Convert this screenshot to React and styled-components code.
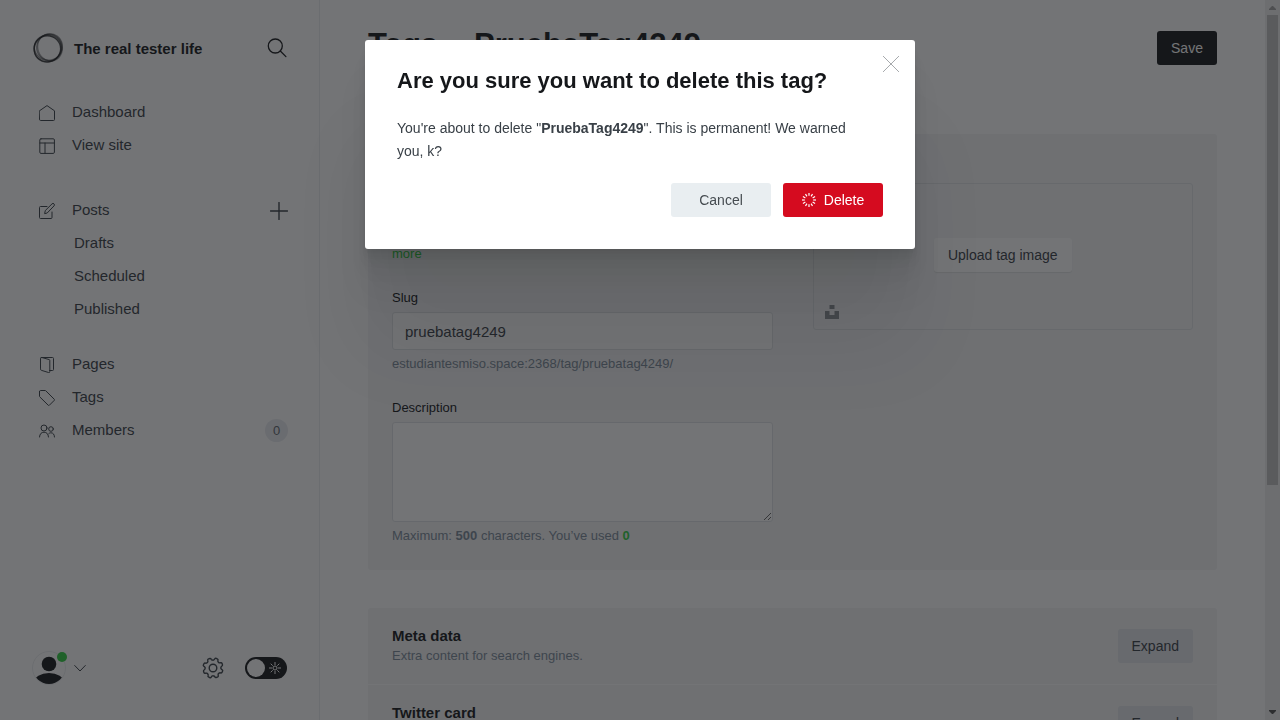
import React from "react";
import styled, { createGlobalStyle } from "styled-components";

const GlobalStyle = createGlobalStyle`
  *, *::before, *::after { box-sizing: border-box; }
  body {
    margin: 0;
    background: #fff;
    color: #15171a;
    font-family: "Liberation Sans", Arial, sans-serif;
    font-size: 14px;
  }
  h1, h2, p, ul { margin: 0; padding: 0; }
  ul { list-style: none; }
  a { color: inherit; text-decoration: none; }
  button, input, textarea { font-family: inherit; }
  svg { display: block; flex: none; }
`;

/* ---------- shell ---------- */

const Shell = styled.div`
  display: flex;
  height: 100vh;
  overflow: hidden;
`;

const Sidebar = styled.nav`
  flex: 0 0 320px;
  display: flex;
  flex-direction: column;
  padding: 32px 31px 35px 32px;
  border-right: 1px solid #ebeef0;
  color: #394047;
`;

const Main = styled.main`
  flex: 1;
  min-width: 0;
  padding: 0 48px;
  overflow: hidden;
`;

const IconButton = styled.button`
  display: flex;
  align-items: center;
  padding: 0;
  border: 0;
  background: none;
  color: ${(p) => p.$color || "#15171a"};
`;

/* ---------- sidebar ---------- */

const SiteHeader = styled.header`
  display: flex;
  align-items: center;
  gap: 10px;
  height: 32px;
  margin-bottom: 32px;
  padding-right: 1px;
`;

const SiteName = styled.div`
  flex: 1;
  padding-top: 2px;
  color: #15171a;
  font-size: 15px;
  font-weight: 700;
  line-height: 20px;
`;

const NavList = styled.ul`
  margin-bottom: ${(p) => p.$gap || 0}px;
`;

const NavRow = styled.li`
  display: flex;
  align-items: center;
  justify-content: space-between;
  height: 33px;
`;

const NavLink = styled.a`
  display: flex;
  align-items: center;
  gap: 17px;
  padding-left: ${(p) => (p.$nested ? 42 : 7)}px;
  font-size: 15px;
  line-height: 30px;
`;

const NavText = styled.span`
  padding-bottom: 2px;
`;

const Badge = styled.span`
  min-width: 23px;
  height: 23px;
  border-radius: 12px;
  background: #e9ebf0;
  color: #5d666f;
  font-size: 13px;
  line-height: 23px;
  text-align: center;
`;

const SidebarFooter = styled.footer`
  display: flex;
  align-items: center;
  height: 34px;
  margin-top: auto;
  padding-right: 1px;
`;

const UserButton = styled(IconButton)`
  gap: 8px;
  margin-right: auto;
`;

const AvatarWrap = styled.span`
  position: relative;
  &::after {
    content: "";
    position: absolute;
    top: 1px;
    right: -1px;
    width: 10px;
    height: 10px;
    border-radius: 50%;
    background: #30cf43;
  }
`;

const Toggle = styled.label`
  position: relative;
  display: flex;
  margin-left: 21px;
  svg {
    position: absolute;
    top: 4px;
    right: 5px;
  }
`;

const ToggleInput = styled.input`
  appearance: none;
  width: 42px;
  height: 22px;
  margin: 0;
  padding: 2px;
  border-radius: 11px;
  background: #15171a;
  &::before {
    content: "";
    display: block;
    width: 18px;
    height: 18px;
    border-radius: 50%;
    background: #fff;
  }
`;

/* ---------- content ---------- */

const PageHeader = styled.header`
  display: flex;
  align-items: center;
  justify-content: space-between;
  height: 96px;
  margin-bottom: 38px;
`;

const PageTitle = styled.h1`
  display: flex;
  align-items: center;
  gap: 8px;
  padding-bottom: 6px;
  font-size: 31px;
  font-weight: 700;
  line-height: 36px;
`;

const Button = styled.button`
  display: inline-flex;
  align-items: center;
  justify-content: center;
  gap: 8px;
  height: 34px;
  min-width: ${(p) => p.$width || 0}px;
  padding: 0 14px;
  border: 0;
  border-radius: 3px;
  background: ${(p) => p.$bg};
  color: ${(p) => p.$fg};
  box-shadow: ${(p) => (p.$raised ? "0 1px 1px rgba(0, 0, 0, 0.08)" : "none")};
  font-size: 14px;
  line-height: 34px;
  white-space: nowrap;
`;

const Block = styled.section`
  margin-bottom: 38px;
  border-radius: 3px;
  background: #f4f5f6;
`;

const FormBlock = styled(Block)`
  display: grid;
  grid-template-columns: 1fr 1fr;
  gap: 40px;
  padding: 24px 24px 25px;
`;

const Fields = styled.div`
  display: flex;
  flex-direction: column;
  gap: 24px;
  min-width: 0;
`;

const NameRow = styled.div`
  display: grid;
  grid-template-columns: 1fr 120px;
  gap: 16px;
`;

const Label = styled.label`
  display: block;
  margin-bottom: 4px;
  font-size: 13px;
  line-height: 21px;
`;

const fieldStyle = `
  display: block;
  width: 100%;
  border: 1px solid #dfe2e5;
  border-radius: 3px;
  background: #fff;
  color: #394047;
  font-size: 15px;
`;

const TextInput = styled.input`
  ${fieldStyle}
  height: 38px;
  padding: 0 12px;
`;

const TextArea = styled.textarea`
  ${fieldStyle}
  height: 100px;
  padding: 10px 12px;
  resize: vertical;
`;

const Help = styled.p`
  margin-top: 4px;
  color: #7c8b9a;
  font-size: 13px;
  line-height: 19px;
  a, b[data-count] { color: #30cf43; }
`;

const ImageDrop = styled.div`
  position: relative;
  display: flex;
  align-items: center;
  justify-content: center;
  height: 147px;
  padding-bottom: 4px;
  border: 1px solid #e0e3e6;
  border-radius: 3px;
`;

const UnsplashButton = styled(IconButton)`
  position: absolute;
  bottom: 10px;
  left: 11px;
`;

const ExpandRow = styled.div`
  display: flex;
  align-items: center;
  justify-content: space-between;
  padding: 18px 24px;
  border-bottom: 1px solid #fff;
`;

const RowTitle = styled.h2`
  font-size: 15px;
  font-weight: 700;
  line-height: 20px;
`;

const RowText = styled.p`
  color: #7c8b9a;
  font-size: 13px;
  line-height: 20px;
`;

/* ---------- scroll track ---------- */

const ScrollTrack = styled.div`
  flex: 0 0 15px;
  display: flex;
  flex-direction: column;
  align-items: center;
  justify-content: space-between;
  background: #f1f1f1;
`;

const ScrollUpper = styled.div`
  display: flex;
  flex-direction: column;
  height: 485px;
`;

const ScrollThumb = styled.div`
  flex: 1;
  width: 11px;
  margin: 0 2px;
  background: #c1c1c1;
`;

/* ---------- modal ---------- */

const Overlay = styled.div`
  position: fixed;
  inset: 0;
  display: flex;
  align-items: flex-start;
  justify-content: center;
  padding-top: 40px;
  background: rgba(21, 23, 26, 0.6);
`;

const Dialog = styled.div`
  position: relative;
  width: 550px;
  padding: 28px 32px 32px;
  border-radius: 3px;
  background: #fff;
  box-shadow:
    0 3px 2px rgba(0, 0, 0, 0.02),
    0 7px 5px rgba(0, 0, 0, 0.03),
    0 13px 10px rgba(0, 0, 0, 0.035),
    0 22px 18px rgba(0, 0, 0, 0.04),
    0 42px 33px rgba(0, 0, 0, 0.05),
    0 100px 80px rgba(0, 0, 0, 0.07);
`;

const DialogTitle = styled.h1`
  margin-bottom: 24px;
  font-size: 22px;
  font-weight: 700;
  line-height: 25px;
`;

const DialogText = styled.p`
  margin-bottom: 20px;
  padding-right: 20px;
  color: #394047;
  font-size: 14px;
  line-height: 23px;
`;

const DialogActions = styled.div`
  display: flex;
  justify-content: flex-end;
  gap: 12px;
`;

const CloseButton = styled(IconButton)`
  position: absolute;
  top: 16px;
  right: 16px;
`;

/* ---------- icons ---------- */

const Icon = ({ size = 16, width = 1, children }) => (
  <svg width={size} height={size} viewBox={`0 0 ${size} ${size}`} fill="none" stroke="currentColor"
    strokeWidth={width} strokeLinecap="round" strokeLinejoin="round" aria-hidden="true">
    {children}
  </svg>
);

const HomeIcon = () => (
  <Icon><path d="M.5 5.8 8 .6l7.500 5.200v8.700a1 1 0 0 1-1 1h-13a1 1 0 0 1-1-1z" /></Icon>
);
const SiteIcon = () => (
  <Icon><rect x=".8" y=".8" width="14.600" height="14.600" rx="1.200" /><path d="M.8 5h14.600M6 5v10.400" /></Icon>
);
const PostsIcon = () => (
  <Icon>
    <path d="M8 3.500H1.500a1 1 0 0 0-1 1v10a1 1 0 0 0 1 1h10.500a1 1 0 0 0 1-1V9" />
    <path d="m5.700 10.300.6-2.800L13 .9a1.300 1.300 0 0 1 2 0 1.400 1.400 0 0 1 0 2L8.500 9.700z" />
  </Icon>
);
const PagesIcon = () => (
  <Icon>
    <path d="M10.500 13.500h3a1 1 0 0 0 1-1v-11a1 1 0 0 0-1-1H2.500" />
    <path d="M1.500 1.500a1 1 0 0 1 1.300-1l7.200 2a1 1 0 0 1 .8 1v11a1 1 0 0 1-1.300 1l-7.200-2.200a1 1 0 0 1-.8-1z" />
  </Icon>
);
const TagIcon = () => (
  <Icon><path d="M.5 1.500v4.700a1 1 0 0 0 .3.700l8.500 8.400a.7.700 0 0 0 1 0l5-5a.7.700 0 0 0 0-1L6.800.8a1 1 0 0 0-.7-.3H1.500a1 1 0 0 0-1 1z" /></Icon>
);
const MembersIcon = () => (
  <Icon>
    <circle cx="5" cy="5" r="3" />
    <circle cx="12" cy="6" r="2.300" />
    <path d="M.5 14C.7 10.800 2.500 9.200 5 9.200s4.300 1.600 4.500 4.800" />
    <path d="M9.800 10.600c.7-.6 1.400-.8 2.200-.8 2 0 3.300 1.400 3.500 4.200" />
  </Icon>
);
const SearchIcon = () => (
  <Icon size={20} width={1.3}><circle cx="8.300" cy="8" r="7" /><path d="m13.300 13 5.600 5.600" /></Icon>
);
const PlusIcon = () => (
  <Icon size={18} width={1.4}><path d="M9 .5v17M.5 9h17" /></Icon>
);
const ChevronIcon = () => (
  <Icon size={12} width={1}><path d="m.7 3.500 5.300 5.500 5.300-5.500" /></Icon>
);

const gearOutline = (() => {
  const at = (deg, r) => {
    const a = (deg * Math.PI) / 180;
    return `${(11 + r * Math.sin(a)).toFixed(2)} ${(11 - r * Math.cos(a)).toFixed(2)}`;
  };
  let d = `M${at(-4, 8)}`;
  for (let i = 0; i < 8; i += 1) {
    const s = i * 45;
    d += `Q${at(s, 7.6)} ${at(s + 4, 8)}`;
    d += `Q${at(s + 9, 8.4)} ${at(s + 11, 9.4)}`;
    d += `Q${at(s + 13, 10.3)} ${at(s + 19, 10.1)}`;
    d += `L${at(s + 27, 10)}`;
    d += `Q${at(s + 33, 9.8)} ${at(s + 33, 9)}`;
    d += `Q${at(s + 34, 8.2)} ${at(s + 41, 8)}`;
  }
  return `${d}Z`;
})();
const GearIcon = () => (
  <Icon size={22} width={1.4}><path d={gearOutline} /><circle cx="11" cy="11" r="3.800" /></Icon>
);

const SunIcon = () => (
  <svg width="14" height="14" viewBox="0 0 14 14" fill="none" stroke="#fff" aria-hidden="true">
    <circle cx="7" cy="7" r="2" />
    <path d="M7 1v3M7 10v3M1 7h3M10 7h3M2.700 2.700l2 2M9.300 9.300l2 2M2.700 11.300l2-2M9.300 4.700l2-2" />
  </svg>
);

const LogoMark = () => (
  <svg width="32" height="32" viewBox="0 0 32 32" fill="none" stroke="#15171a" aria-hidden="true">
    <ellipse cx="15.300" cy="16.800" rx="13.300" ry="13" strokeWidth="1.300" opacity=".75" />
    <ellipse cx="17.500" cy="15" rx="12.600" ry="13.300" strokeWidth="1.200" opacity=".45" transform="rotate(35 17.500 15)" />
    <ellipse cx="15.800" cy="16.400" rx="14.200" ry="13" strokeWidth="1.400" opacity=".5" transform="rotate(-50 15.800 16.400)" />
    <ellipse cx="18" cy="15.500" rx="12.200" ry="13.600" strokeWidth="1.300" opacity=".4" transform="rotate(-20 18 15.500)" />
    <ellipse cx="16" cy="16" rx="13.800" ry="12.600" strokeWidth="1.200" opacity=".5" transform="rotate(20 16 16)" />
  </svg>
);

const Avatar = () => (
  <svg width="34" height="34" viewBox="0 0 34 34" aria-hidden="true">
    <defs><clipPath id="avatar-clip"><circle cx="17" cy="17" r="16" /></clipPath></defs>
    <circle cx="17" cy="17" r="16.500" fill="#fff" stroke="#eceef0" />
    <circle cx="17" cy="13" r="7.300" fill="#15171a" />
    <ellipse cx="17" cy="31" rx="15" ry="9" fill="#15171a" clipPath="url(#avatar-clip)" />
  </svg>
);

const UnsplashIcon = () => (
  <svg width="14" height="14" viewBox="0 0 14 14" fill="#8b9095" aria-hidden="true">
    <path d="M4.500 0h5v4h-5zM0 6h4.500v4h5V6H14v8H0z" />
  </svg>
);

const Spinner = () => (
  <svg width="14" height="14" viewBox="0 0 14 14" stroke="#fff" strokeWidth="1.200" aria-hidden="true">
    {Array.from({ length: 12 }, (_, i) => (
      <path key={i} d="M7 0v2.800" transform={`rotate(${i * 30} 7 7)`} />
    ))}
  </svg>
);

const CloseIcon = () => (
  <Icon width={0.8}><path d="m.3.3 15.400 15.400M15.700.3.3 15.700" /></Icon>
);
const CrumbIcon = () => (
  <Icon size={20} width={2}><path d="m7 6 6 6-6 6" /></Icon>
);
const ScrollArrow = ({ down }) => (
  <svg width="15" height="15" viewBox="0 0 15 15" fill={down ? "#505050" : "#a3a3a3"} aria-hidden="true">
    <path d={down ? "M4 5h7v1l-3 3h-1l-3-3z" : "M4 10h7V9L8 6H7L4 9z"} />
  </svg>
);

/* ---------- page ---------- */

const NavItem = ({ icon, nested, extra, children }) => (
  <NavRow>
    <NavLink href="#" $nested={nested}>{icon}<NavText>{children}</NavText></NavLink>
    {extra}
  </NavRow>
);

const ExpandSection = ({ title, text }) => (
  <ExpandRow>
    <div>
      <RowTitle>{title}</RowTitle>
      <RowText>{text}</RowText>
    </div>
    <Button $bg="#e3e5ea" $fg="#394047">Expand</Button>
  </ExpandRow>
);

export default function App() {
  return (
    <>
      <GlobalStyle />
      <Shell>
        <Sidebar>
          <SiteHeader>
            <LogoMark />
            <SiteName>The real tester life</SiteName>
            <IconButton aria-label="Search"><SearchIcon /></IconButton>
          </SiteHeader>
          <NavList $gap={32}>
            <NavItem icon={<HomeIcon />}>Dashboard</NavItem>
            <NavItem icon={<SiteIcon />}>View site</NavItem>
          </NavList>
          <NavList $gap={22}>
            <NavItem icon={<PostsIcon />} extra={<IconButton aria-label="New post" $color="#394047"><PlusIcon /></IconButton>}>Posts</NavItem>
            <NavItem nested>Drafts</NavItem>
            <NavItem nested>Scheduled</NavItem>
            <NavItem nested>Published</NavItem>
          </NavList>
          <NavList>
            <NavItem icon={<PagesIcon />}>Pages</NavItem>
            <NavItem icon={<TagIcon />}>Tags</NavItem>
            <NavItem icon={<MembersIcon />} extra={<Badge>0</Badge>}>Members</NavItem>
          </NavList>
          <SidebarFooter>
            <UserButton aria-label="Account" $color="#394047">
              <AvatarWrap><Avatar /></AvatarWrap>
              <ChevronIcon />
            </UserButton>
            <IconButton aria-label="Settings" $color="#394047"><GearIcon /></IconButton>
            <Toggle>
              <ToggleInput type="checkbox" aria-label="Night shift" />
              <SunIcon />
            </Toggle>
          </SidebarFooter>
        </Sidebar>

        <Main>
          <PageHeader>
            <PageTitle>
              <a href="#">Tags</a>
              <CrumbIcon />
              <span>PruebaTag4249</span>
            </PageTitle>
            <Button $bg="#15171a" $fg="#fff" $width={60}>Save</Button>
          </PageHeader>

          <FormBlock>
            <Fields>
              <NameRow>
                <div>
                  <Label htmlFor="tag-name">Name</Label>
                  <TextInput id="tag-name" defaultValue="PruebaTag4249" />
                  <Help>Start with # to create internal tags <a href="#">Learn more</a></Help>
                </div>
                <div>
                  <Label htmlFor="tag-color">Color</Label>
                  <TextInput id="tag-color" placeholder="15171A" />
                </div>
              </NameRow>
              <div>
                <Label htmlFor="tag-slug">Slug</Label>
                <TextInput id="tag-slug" defaultValue="pruebatag4249" />
                <Help>estudiantesmiso.space:2368/tag/pruebatag4249/</Help>
              </div>
              <div>
                <Label htmlFor="tag-description">Description</Label>
                <TextArea id="tag-description" />
                <Help>Maximum: <b>500</b> characters. You’ve used <b data-count>0</b></Help>
              </div>
            </Fields>
            <div>
              <Label as="div">Tag image</Label>
              <ImageDrop>
                <Button $bg="#fff" $fg="#394047" $raised>Upload tag image</Button>
                <UnsplashButton aria-label="Unsplash"><UnsplashIcon /></UnsplashButton>
              </ImageDrop>
            </div>
          </FormBlock>

          <Block>
            <ExpandSection title="Meta data" text="Extra content for search engines." />
            <ExpandSection title="Twitter card" text="Customize structured data for Twitter." />
          </Block>
        </Main>

        <ScrollTrack aria-hidden="true">
          <ScrollUpper><ScrollArrow /><ScrollThumb /></ScrollUpper>
          <ScrollArrow down />
        </ScrollTrack>
      </Shell>

      <Overlay>
        <Dialog role="dialog" aria-modal="true" aria-labelledby="dialog-title">
          <DialogTitle id="dialog-title">Are you sure you want to delete this tag?</DialogTitle>
          <DialogText>
            You're about to delete "<strong>PruebaTag4249</strong>". This is permanent! We warned you, k?
          </DialogText>
          <DialogActions>
            <Button $bg="#e9eef1" $fg="#464c51" $width={100}>Cancel</Button>
            <Button $bg="#d50b1f" $fg="#fff" $width={100}><Spinner />Delete</Button>
          </DialogActions>
          <CloseButton aria-label="Close" $color="#8f9397"><CloseIcon /></CloseButton>
        </Dialog>
      </Overlay>
    </>
  );
}
